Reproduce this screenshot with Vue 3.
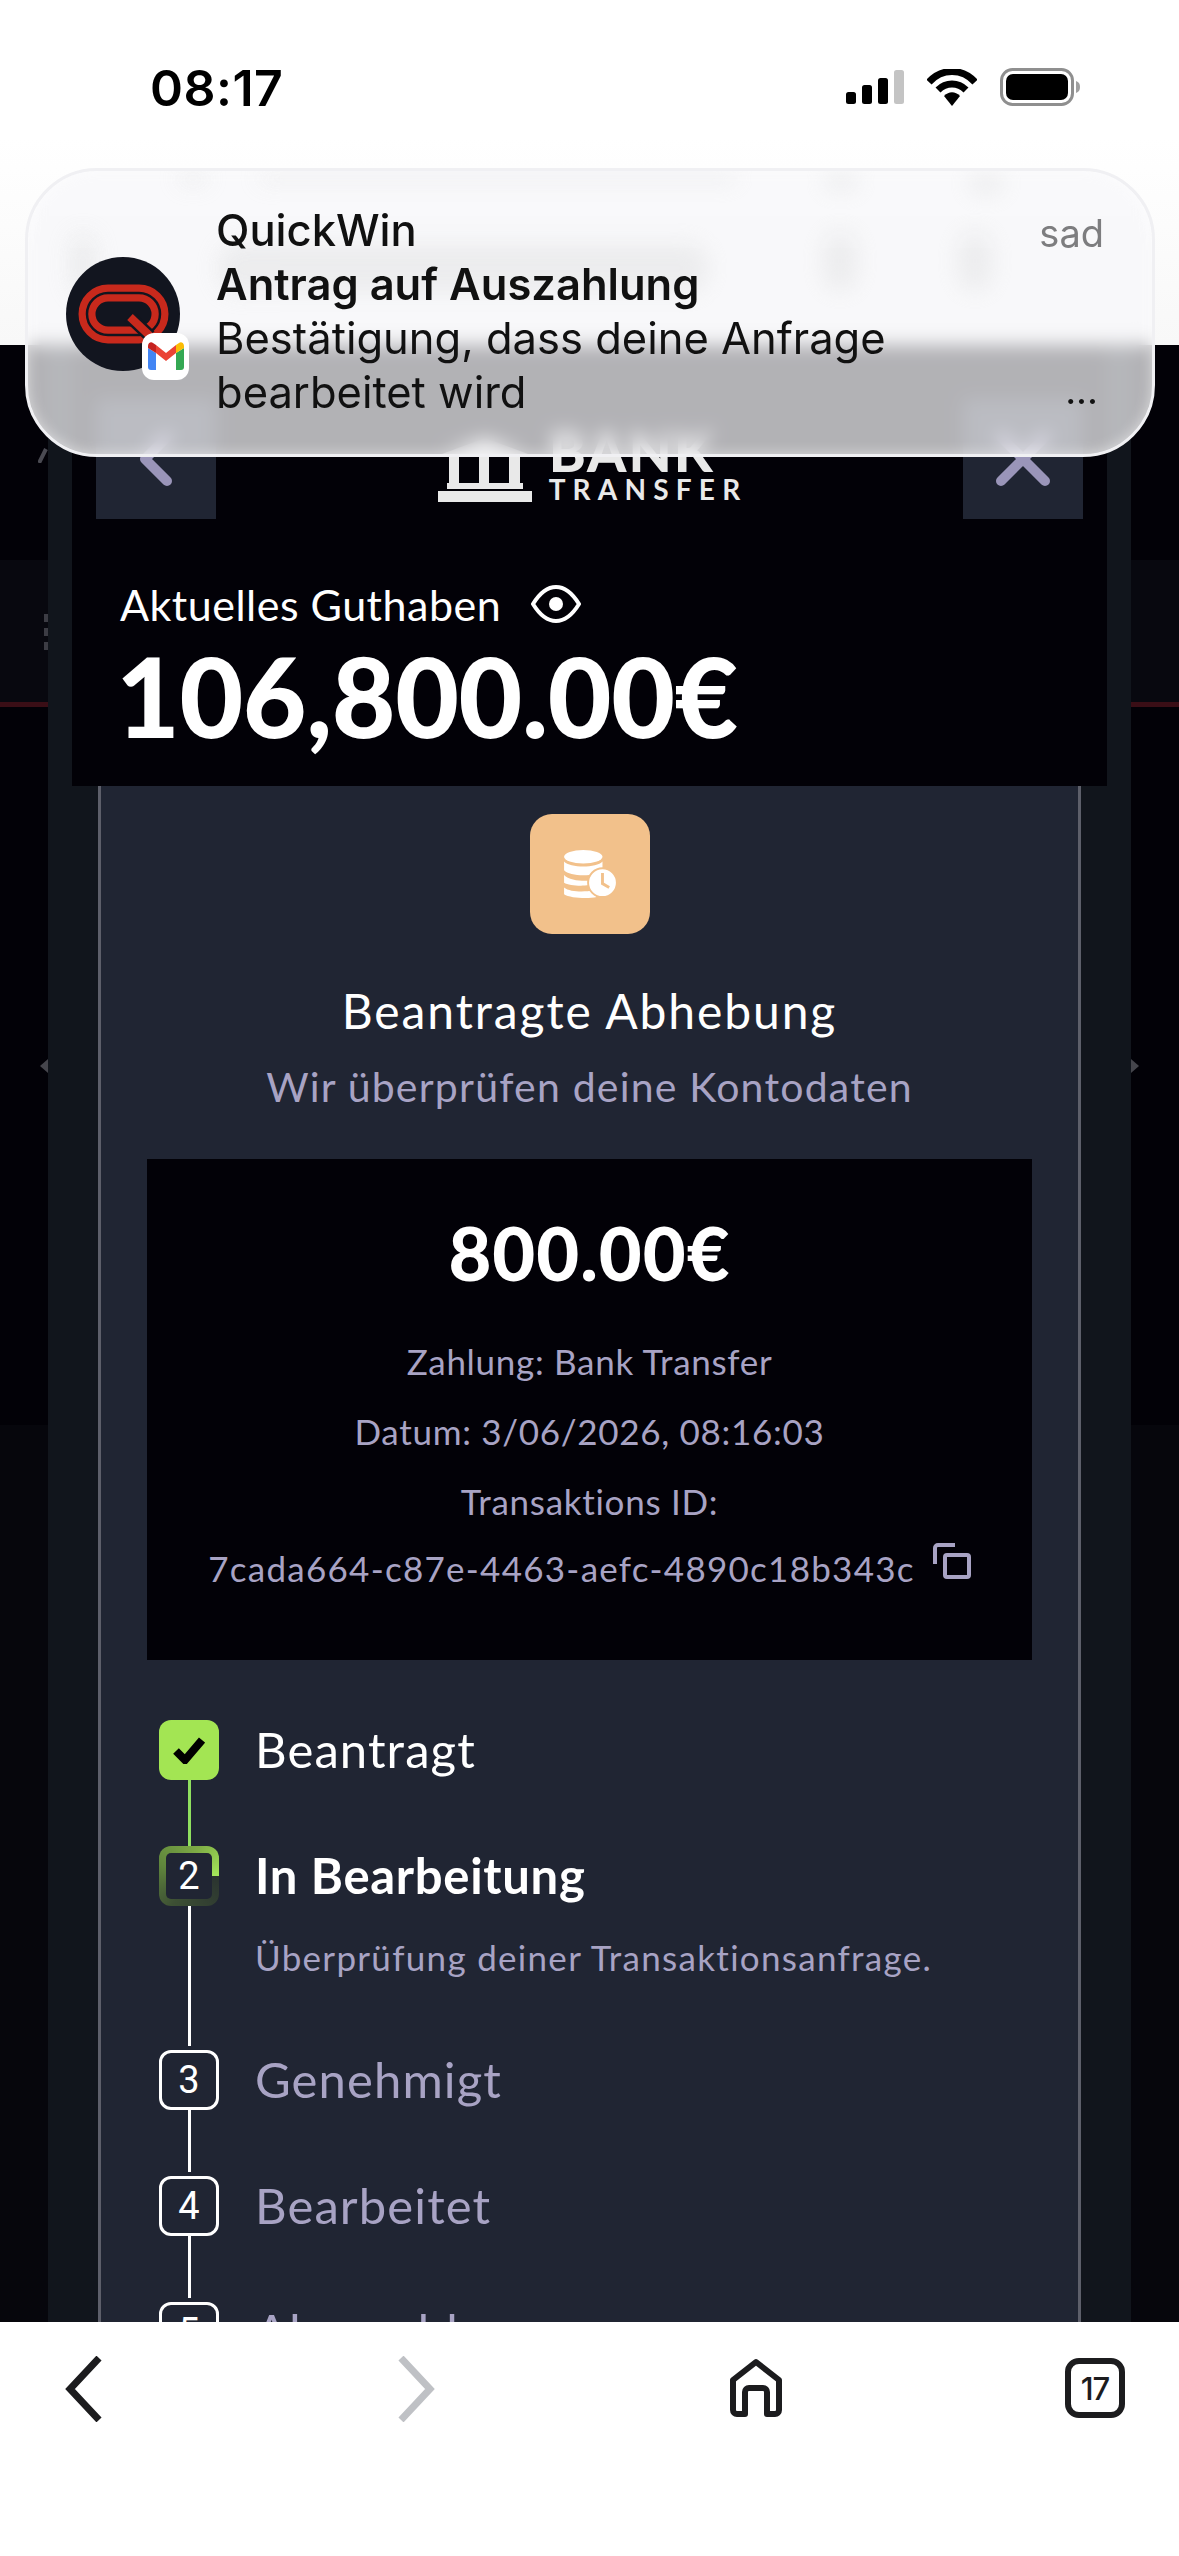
<script setup>
const details = [
  { label: 'Zahlung:', value: 'Bank Transfer' },
  { label: 'Datum:', value: '3/06/2026, 08:16:03' },
]

const steps = [
  { mark: 'done', label: 'Beantragt', line: 'green' },
  { mark: 'active', num: 2, label: 'In Bearbeitung', note: 'Überprüfung deiner Transaktionsanfrage.' },
  { mark: 'todo', num: 3, label: 'Genehmigt' },
  { mark: 'todo', num: 4, label: 'Bearbeitet' },
  { mark: 'todo', num: 5, label: 'Abgeschlossen' },
]
</script>

<template>
  <div class="phone">
    <header class="status">
      <span class="time">08:17</span>
      <div class="status-icons">
        <svg width="58" height="34" viewBox="0 0 58 34">
          <rect x="0" y="22" width="10" height="12" rx="2.5" fill="#000" />
          <rect x="16" y="15" width="10" height="19" rx="2.5" fill="#000" />
          <rect x="32" y="8" width="10" height="26" rx="2.5" fill="#000" />
          <rect x="48" y="0" width="10" height="34" rx="2.5" fill="#c4c4c4" />
        </svg>
        <svg width="50" height="37" viewBox="0 0 50 37">
          <path d="M2 13 C15 -1 35 -1 48 13" fill="none" stroke="#000" stroke-width="7" />
          <path d="M11 21 C19 13 31 13 39 21" fill="none" stroke="#000" stroke-width="7" />
          <path d="M17 27 C22 22 28 22 33 27 L25 37 Z" fill="#000" />
        </svg>
        <svg width="80" height="38" viewBox="0 0 80 38">
          <rect x="1.5" y="1.5" width="71" height="35" rx="11" fill="none" stroke="#8f8f8f" stroke-width="3" />
          <rect x="6" y="6" width="62" height="26" rx="7" fill="#000" />
          <path d="M76 13 C79 14 80 16 80 19 C80 22 79 24 76 25 Z" fill="#a0a0a0" />
        </svg>
      </div>
    </header>

    <main class="stage">
      <aside class="gutter">
        <div class="gutter-top">
          <svg width="10" height="18" viewBox="0 0 10 18"><path d="M1 18 L8 4" stroke="#4a4a52" stroke-width="4" fill="none" /></svg>
        </div>
        <div class="gutter-band">
          <i></i><i></i><i></i>
        </div>
        <div class="gutter-mid">
          <span class="nudge nudge-left"></span>
        </div>
        <div class="gutter-low"></div>
      </aside>

      <section class="modal">
        <div class="balance-panel">
          <div class="panel-bar">
            <button class="square-btn">
              <svg width="60" height="80" viewBox="0 0 60 80">
                <path d="M41 18 L19 40 L41 62" fill="none" stroke="#9a95b9" stroke-width="10" stroke-linecap="round" stroke-linejoin="round" />
              </svg>
            </button>
            <div class="bank-logo">
              <svg width="94" height="64" viewBox="0 0 94 64">
                <path d="M47 0 L90 16 H4 Z" fill="#e9e9e9" />
                <path d="M11 18 h10 v28 h-10 Z M41 18 h10 v28 h-10 Z M71 18 h11 v28 h-11 Z" fill="#e9e9e9" />
                <rect x="9" y="45" width="76" height="6" fill="#e9e9e9" />
                <rect x="0" y="53" width="94" height="11" fill="#e9e9e9" />
              </svg>
              <div class="bank-words">
                <span class="bank-big">BANK</span>
                <span class="bank-small">TRANSFER</span>
              </div>
            </div>
            <button class="square-btn">
              <svg width="60" height="60" viewBox="0 0 60 60">
                <path d="M8 8 L52 52 M52 8 L8 52" fill="none" stroke="#9a95b9" stroke-width="10" stroke-linecap="round" />
              </svg>
            </button>
          </div>
          <div class="balance-label">
            <span>Aktuelles Guthaben</span>
            <svg width="50" height="38" viewBox="0 0 50 38">
              <path d="M2 19 C10 6 17 2 25 2 C33 2 40 6 48 19 C40 32 33 36 25 36 C17 36 10 32 2 19 Z" fill="none" stroke="#fff" stroke-width="4" />
              <circle cx="25" cy="19" r="7" fill="#fff" />
            </svg>
          </div>
          <div class="balance-amount">106,800.00€</div>
        </div>

        <div class="card">
          <div class="coins-badge">
            <svg width="52" height="48" viewBox="0 0 54 50">
              <ellipse cx="20" cy="7" rx="20" ry="7" fill="#fff" />
              <path d="M0 12 C6 19 34 19 40 12 V21 C34 28 6 28 0 21 Z" fill="#fff" />
              <path d="M0 26 C6 33 26 33 32 31 V35 C26 38 6 38 0 34 Z" fill="#fff" />
              <path d="M0 39 C6 44 22 44 30 42 C31 45 32 47 34 49 C24 51 6 50 0 46 Z" fill="#fff" />
              <circle cx="40" cy="34" r="15" fill="#fff" stroke="#f2c18b" stroke-width="2" />
              <path d="M40 24 V35 L47 39" fill="none" stroke="#f2c18b" stroke-width="3" />
            </svg>
          </div>
          <h2 class="card-title">Beantragte Abhebung</h2>
          <p class="card-sub">Wir überprüfen deine Kontodaten</p>

          <div class="summary">
            <div class="summary-amount">800.00€</div>
            <p v-for="row in details" :key="row.label" class="summary-row">
              {{ row.label }} {{ row.value }}
            </p>
            <p class="summary-row">Transaktions ID:</p>
            <p class="summary-row summary-id">
              <span>7cada664-c87e-4463-aefc-4890c18b343c</span>
              <svg width="38" height="36" viewBox="0 0 38 36">
                <path d="M2 21 V5 a3 3 0 0 1 3 -3 H22" fill="none" stroke="#a8a3c4" stroke-width="4" />
                <rect x="12" y="12" width="24" height="22" rx="2" fill="none" stroke="#a8a3c4" stroke-width="4" />
              </svg>
            </p>
          </div>

          <ol class="steps">
            <li v-for="step in steps" :key="step.label" class="step" :class="`step-${step.mark}`">
              <div class="rail">
                <div class="mark">
                  <svg v-if="step.mark === 'done'" width="32" height="28" viewBox="0 0 32 28">
                    <path d="M3 15 L12 24 L29 4" fill="none" stroke="#000" stroke-width="8" />
                  </svg>
                  <span v-else>{{ step.num }}</span>
                </div>
                <div class="link"></div>
              </div>
              <div class="step-body">
                <div class="step-label">{{ step.label }}</div>
                <div v-if="step.note" class="step-note">{{ step.note }}</div>
              </div>
            </li>
          </ol>
        </div>
      </section>

      <aside class="gutter">
        <div class="gutter-top"></div>
        <div class="gutter-band"></div>
        <div class="gutter-mid">
          <span class="nudge nudge-right"></span>
        </div>
        <div class="gutter-low"></div>
      </aside>
    </main>

    <nav class="browser-bar">
      <svg width="40" height="66" viewBox="0 0 40 66">
        <path d="M35 2 L6 33 L35 64" fill="none" stroke="#1c1c1e" stroke-width="7" />
      </svg>
      <svg class="forward-icon" width="40" height="66" viewBox="0 0 40 66">
        <path d="M5 2 L34 33 L5 64" fill="none" stroke="#bfc1c5" stroke-width="7" />
      </svg>
      <svg class="home-icon" width="54" height="60" viewBox="0 0 54 60">
        <path d="M27 4 L50 22 V52 a4 4 0 0 1 -4 4 H38 V34 a4 4 0 0 0 -4 -4 H20 a4 4 0 0 0 -4 4 V56 H8 a4 4 0 0 1 -4 -4 V22 Z" fill="none" stroke="#1c1c1e" stroke-width="6" stroke-linejoin="round" />
      </svg>
      <div class="tab-count">17</div>
    </nav>

    <!-- push banner floats over the page and frosts whatever is under it -->
    <div class="banner">
      <div class="ghosts">
        <i class="g1"></i><i class="g2"></i><i class="g3"></i><i class="g4"></i>
        <i class="g5"></i><i class="g6"></i><i class="g7"></i><i class="g8"></i>
      </div>
      <div class="avatar">
        <svg width="114" height="114" viewBox="0 0 114 114">
          <circle cx="57" cy="57" r="57" fill="#12151f" />
          <rect x="21" y="36" width="73" height="42" rx="21" fill="none" stroke="#c8291c" stroke-width="17" />
          <rect x="21" y="36" width="73" height="42" rx="21" fill="none" stroke="#12151f" stroke-width="2.5" />
          <path d="M63 59 L84 79" stroke="#12151f" stroke-width="13" />
          <path d="M64 60 L84 79" stroke="#c8291c" stroke-width="8" />
        </svg>
        <div class="gmail">
          <svg width="36" height="28" viewBox="0 0 36 28">
            <path d="M0 6 V25 a3 3 0 0 0 3 3 H8 V11 Z" fill="#4285f4" />
            <path d="M28 11 V28 H33 a3 3 0 0 0 3 -3 V6 Z" fill="#34a853" />
            <path d="M8 11 L18 19 L28 11 V3 L18 11 L8 3 Z" fill="#ea4335" />
            <path d="M0 6 L8 11 V3 L5 1 C3 -1 0 1 0 4 Z" fill="#c5221f" />
            <path d="M28 3 V11 L36 6 V4 C36 1 33 -1 31 1 Z" fill="#fbbc04" />
          </svg>
        </div>
      </div>
      <div class="banner-text">
        <div class="banner-app">QuickWin</div>
        <div class="banner-title">Antrag auf Auszahlung</div>
        <div class="banner-body">Bestätigung, dass deine Anfrage bearbeitet wird</div>
      </div>
      <div class="banner-meta">
        <span class="banner-when">sad</span>
        <span class="banner-more">...</span>
      </div>
    </div>
  </div>
</template>

<style>
html, body {
  margin: 0;
  background: #fff;
}
</style>

<style scoped>
.phone {
  position: relative;
  width: 1179px;
  height: 2556px;
  overflow: hidden;
  display: flex;
  flex-direction: column;
  font-family: Lato, "Noto Sans", sans-serif;
  background: #fff;
}

/* status bar */
.status {
  flex: 0 0 345px;
  box-sizing: border-box;
  padding: 58px 99px 0 150px;
  display: flex;
  justify-content: space-between;
  align-items: flex-start;
  background: linear-gradient(#fff 40%, #f8f8f8);
}
.time {
  font-family: Inter, sans-serif;
  font-weight: 600;
  font-size: 50px;
  line-height: 60px;
  letter-spacing: 0.5px;
  color: #000;
}
.status-icons {
  display: flex;
  align-items: center;
  gap: 23px;
  margin-top: 10px;
}

/* dark page */
.stage {
  flex: 1;
  min-height: 0;
  display: flex;
  overflow: hidden;
  background: #020107;
}
.gutter {
  flex: 0 0 48px;
  display: flex;
  flex-direction: column;
  background: #020107;
}
.gutter-top {
  height: 215px;
  padding-top: 100px;
  box-sizing: border-box;
  display: flex;
  justify-content: flex-end;
  align-items: flex-start;
}
.gutter:last-child .gutter-top {
  padding-top: 0;
}
.gutter-band {
  height: 142px;
  box-sizing: content-box;
  background: #08080f;
  border-bottom: 5px solid #3a0e16;
  display: flex;
  flex-direction: column;
  align-items: flex-end;
  padding-top: 0;
  gap: 6px;
}
.gutter-band i {
  width: 4px;
  height: 8px;
  background: #3c3c44;
}
.gutter-band i:first-child {
  margin-top: 54px;
}
.gutter-mid {
  height: 718px;
  display: flex;
  align-items: center;
}
.gutter-low {
  flex: 1;
  background: #06060c;
}
.nudge {
  width: 0;
  height: 0;
  border-top: 7px solid transparent;
  border-bottom: 7px solid transparent;
}
.nudge-left {
  margin-left: auto;
  border-right: 8px solid #45454c;
}
.nudge-right {
  border-left: 8px solid #45454c;
}

.modal {
  flex: 1;
  min-width: 0;
  box-sizing: border-box;
  padding: 0 24px;
  background: #11151c;
}

/* balance header */
.balance-panel {
  box-sizing: border-box;
  height: 441px;
  padding: 54px 24px 0;
  background: #020107;
}
.panel-bar {
  display: flex;
  justify-content: space-between;
  align-items: flex-end;
}
.square-btn {
  width: 120px;
  height: 120px;
  padding: 0;
  border: 0;
  background: #202533;
  display: flex;
  align-items: center;
  justify-content: center;
}
.bank-logo {
  display: flex;
  align-items: flex-end;
  gap: 17px;
  margin: 0 0 17px 6px;
}
.bank-words {
  display: flex;
  flex-direction: column;
  color: #e9e9e9;
}
.bank-big {
  font-weight: 900;
  font-size: 56px;
  line-height: 38px;
  letter-spacing: 2px;
}
.bank-small {
  font-weight: 700;
  font-size: 28px;
  line-height: 26px;
  letter-spacing: 7.2px;
  margin-top: 6px;
}
.balance-label {
  display: flex;
  align-items: center;
  gap: 30px;
  margin: 60px 0 0 24px;
  height: 50px;
  font-size: 43px;
  letter-spacing: 0.5px;
  color: #fff;
}
.balance-amount {
  margin: 6px 0 0 20px;
  font-weight: 900;
  font-size: 110px;
  line-height: 120px;
  letter-spacing: -0.4px;
  color: #fff;
}

/* withdrawal card */
.card {
  box-sizing: border-box;
  margin: 0 26px;
  height: 1600px;
  padding: 28px 46px 0;
  background: #202533;
  border-left: 3px solid #5d5f6a;
  border-right: 3px solid #5d5f6a;
}
.coins-badge {
  width: 120px;
  height: 120px;
  margin: 0 auto;
  border-radius: 22px;
  background: #f2c18b;
  display: flex;
  align-items: center;
  justify-content: center;
}
.card-title {
  margin: 47px 0 0;
  text-align: center;
  font-weight: 400;
  font-size: 48px;
  line-height: 60px;
  letter-spacing: 1.9px;
  color: #fff;
}
.card-sub {
  margin: 21px 0 0;
  text-align: center;
  font-size: 41px;
  line-height: 50px;
  letter-spacing: 1.2px;
  color: #a8a3c4;
}

.summary {
  box-sizing: border-box;
  height: 501px;
  margin-top: 47px;
  padding-top: 58px;
  background: #020107;
  text-align: center;
  color: #a8a3c4;
}
.summary-amount {
  font-weight: 900;
  font-size: 74px;
  line-height: 72px;
  letter-spacing: 1px;
  color: #fff;
  margin-bottom: 52px;
}
.summary-row {
  margin: 0 0 30px;
  font-size: 35px;
  line-height: 40px;
  letter-spacing: 0.7px;
}
.summary-id {
  display: flex;
  justify-content: center;
  align-items: center;
  gap: 18px;
  margin-top: -3px;
  letter-spacing: 1.27px;
}
.summary-id svg {
  margin-top: -14px;
}

/* progress steps */
.steps {
  list-style: none;
  margin: 60px 0 0;
  padding: 0 0 0 12px;
}
.step {
  display: flex;
  gap: 36px;
}
.rail {
  flex: 0 0 60px;
  display: flex;
  flex-direction: column;
  align-items: center;
}
.mark {
  box-sizing: border-box;
  width: 60px;
  height: 60px;
  display: flex;
  align-items: center;
  justify-content: center;
  border-radius: 12px;
  font-family: Roboto, sans-serif;
  font-weight: 400;
  font-size: 38px;
  color: #fff;
}
.step-done .mark {
  background: #a3e553;
}
.step-active .mark {
  border: 7px solid transparent;
  background:
    linear-gradient(#202533, #202533) padding-box,
    conic-gradient(from 90deg, #2a3330, #3d5034 120deg, #5f853c 200deg, #7fad46 290deg, #a5e85a 360deg) border-box;
}
.step-todo .mark {
  border: 3px solid #fff;
}
.link {
  flex: 1;
  width: 3px;
  background: #fff;
  margin-bottom: 4px;
}
.step-done .link {
  background: #8fe05f;
  margin-bottom: 0;
}
.step-body {
  padding-bottom: 68px;
}
.step-label {
  font-size: 49px;
  line-height: 58px;
  letter-spacing: 1.1px;
  color: #a8a3c4;
}
.step-done .step-label {
  color: #fff;
}
.step-active .step-label {
  color: #fff;
  font-weight: 700;
  letter-spacing: 0.7px;
}
.step-note {
  margin-top: 33px;
  font-size: 35px;
  line-height: 40px;
  letter-spacing: 1.3px;
  color: #a8a3c4;
}
.step-active .step-body {
  padding-bottom: 73px;
}

/* browser toolbar */
.browser-bar {
  flex: 0 0 234px;
  box-sizing: border-box;
  position: relative;
  display: flex;
  justify-content: space-between;
  align-items: flex-start;
  padding: 34px 54px 0 64px;
  background: #fff;
}
.forward-icon {
  margin-left: 10px;
}
.home-icon {
  margin: 2px 0 0 10px;
}
.tab-count {
  box-sizing: border-box;
  width: 60px;
  height: 60px;
  margin-top: 2px;
  border: 6px solid #1c1c1e;
  border-radius: 14px;
  display: flex;
  align-items: center;
  justify-content: center;
  font-family: Inter, sans-serif;
  font-size: 31px;
  font-weight: 500;
  letter-spacing: -1px;
  color: #1c1c1e;
}

/* notification banner */
.banner {
  position: absolute;
  top: 168px;
  left: 25px;
  box-sizing: border-box;
  width: 1130px;
  height: 289px;
  display: flex;
  padding: 32px 48px 0 38px;
  border: 3px solid #f0f0f3;
  border-radius: 72px;
  overflow: hidden;
  background: rgba(246, 246, 250, 0.72);
  backdrop-filter: blur(9px);
  box-shadow: inset 0 0 14px rgba(255, 255, 255, 0.55);
  font-family: Inter, sans-serif;
  color: #111;
}
.ghosts i {
  position: absolute;
  display: block;
  background: #cfd0d0;
  opacity: 0.28;
  filter: blur(11px);
  border-radius: 20px;
}
.g1 { left: 150px; top: 0; width: 30px; height: 14px; }
.g2 { left: 230px; top: 2px; width: 480px; height: 10px; }
.g3 { left: 795px; top: 2px; width: 36px; height: 18px; }
.g4 { left: 940px; top: 2px; width: 36px; height: 22px; }
.g5 { left: 42px; top: 62px; width: 26px; height: 62px; }
.g6 { left: 190px; top: 72px; width: 490px; height: 50px; }
.g7 { left: 795px; top: 60px; width: 34px; height: 60px; }
.g8 { left: 930px; top: 60px; width: 34px; height: 60px; }

.avatar {
  position: relative;
  flex: 0 0 114px;
  height: 114px;
  align-self: center;
  margin: -30px 36px 0 0;
}
.avatar svg {
  display: block;
}
.gmail {
  position: absolute;
  left: 76px;
  top: 76px;
  width: 47px;
  height: 47px;
  border-radius: 12px;
  background: #fff;
  display: flex;
  align-items: center;
  justify-content: center;
}
.banner-text {
  position: relative;
  flex: 1;
  font-size: 43.5px;
  line-height: 54px;
}
.banner-app {
  font-weight: 500;
}
.banner-title {
  font-weight: 600;
}
.banner-body {
  width: 720px;
}
.banner-meta {
  position: relative;
  display: flex;
  flex-direction: column;
  align-items: flex-end;
  justify-content: space-between;
  height: 202px;
}
.banner-when {
  font-size: 38px;
  line-height: 60px;
  color: #7d7d7f;
}
.banner-more {
  font-size: 38px;
  line-height: 30px;
  padding-right: 6px;
}
</style>
